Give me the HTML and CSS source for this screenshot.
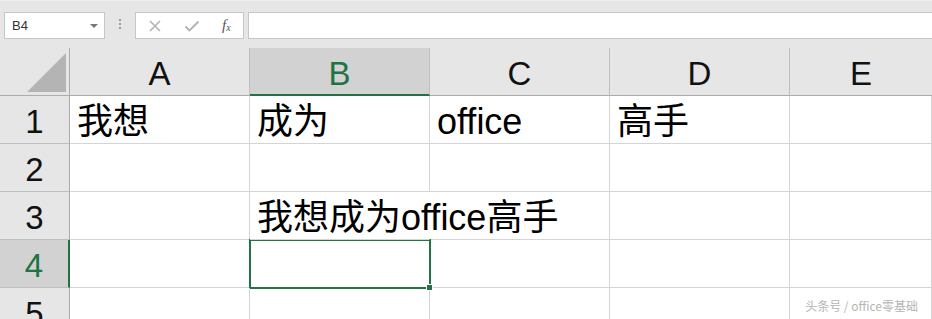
FILE: index.html
```html
<!DOCTYPE html>
<html lang="zh-CN">
<head>
    <meta charset="UTF-8">
    <title>Book1 - Excel</title>
    <link rel="stylesheet" href="styles.css">
</head>
<body>
    <div class="formula-bar">
        <div class="name-box">
            <span>B4</span>
            <span class="caret"></span>
        </div>
        <div class="grip"></div>
        <div class="fx-buttons">
            <svg class="fx-icon" width="14" height="14" viewBox="0 0 14 14"><path d="M2 2 L12 12 M12 2 L2 12" stroke="#b3b3b3" stroke-width="1.6" fill="none"/></svg>
            <svg class="fx-icon" width="16" height="14" viewBox="0 0 16 14"><path d="M1.5 7.5 L5.5 11.5 L14.5 2.5" stroke="#b3b3b3" stroke-width="1.8" fill="none"/></svg>
            <span class="fx">f<sub>x</sub></span>
        </div>
        <div class="formula-input"></div>
    </div>

    <div class="sheet">
        <div class="corner"><span class="corner-tri"></span></div>
        <div class="col-head">A</div>
        <div class="col-head active">B</div>
        <div class="col-head">C</div>
        <div class="col-head">D</div>
        <div class="col-head last">E</div>

        <div class="row-head">1</div>
        <div class="cell">我想</div>
        <div class="cell">成为</div>
        <div class="cell">office</div>
        <div class="cell">高手</div>
        <div class="cell"></div>

        <div class="row-head">2</div>
        <div class="cell"></div>
        <div class="cell"></div>
        <div class="cell"></div>
        <div class="cell"></div>
        <div class="cell"></div>

        <div class="row-head">3</div>
        <div class="cell"></div>
        <div class="cell spill">我想成为office高手</div>
        <div class="cell"></div>
        <div class="cell"></div>
        <div class="cell"></div>

        <div class="row-head active">4</div>
        <div class="cell"></div>
        <div class="cell selected"><span class="handle"></span></div>
        <div class="cell"></div>
        <div class="cell"></div>
        <div class="cell"></div>

        <div class="row-head">5</div>
        <div class="cell"></div>
        <div class="cell"></div>
        <div class="cell"></div>
        <div class="cell"></div>
        <div class="cell"></div>
    </div>

    <div class="watermark">头条号 / office零基础</div>
</body>
</html>
```

FILE: styles.css
```css
body {
    margin: 0;
    width: 932px;
    height: 319px;
    overflow: hidden;
    background: #e6e6e6;
    font-family: "Liberation Sans", "Noto Sans CJK SC", sans-serif;
    position: relative;
}
.formula-bar {
    height: 48px;
    display: flex;
    align-items: flex-start;
    padding: 11px 0 0 4px;
    box-sizing: border-box;
    border-top: 1px solid #f0f0f0;
}
.name-box {
    width: 101px;
    height: 27px;
    box-sizing: border-box;
    background: white;
    border: 1px solid #c6c6c6;
    display: flex;
    align-items: center;
    justify-content: space-between;
    padding: 0 6px 0 7px;
    font-size: 13px;
    color: #333;
}
.caret {
    width: 0;
    height: 0;
    border-left: 4px solid transparent;
    border-right: 4px solid transparent;
    border-top: 4px solid #777;
}
.grip {
    width: 2px;
    height: 12px;
    margin: 7px 14px 0 14px;
    background: repeating-linear-gradient(#9a9a9a 0 2px, transparent 2px 4px);
}
.fx-buttons {
    width: 109px;
    height: 27px;
    box-sizing: border-box;
    background: white;
    border: 1px solid #c6c6c6;
    display: flex;
    align-items: center;
    gap: 22px;
    padding-left: 12px;
}
.fx {
    font-family: "Liberation Serif", serif;
    font-style: italic;
    font-size: 15px;
    color: #555;
    line-height: 1;
}
.fx sub {
    font-size: 10px;
    vertical-align: -1px;
}
.formula-input {
    flex: 1;
    height: 27px;
    margin-left: 4px;
    box-sizing: border-box;
    background: white;
    border: 1px solid #c6c6c6;
    border-right: none;
}
.sheet {
    display: grid;
    grid-template-columns: 70px 180px 180px 180px 180px 1fr;
    grid-template-rows: 48px;
    grid-auto-rows: 48px;
    background: white;
}
.corner {
    background: #e6e6e6;
    border-right: 1px solid #ababab;
    border-bottom: 1px solid #ababab;
    position: relative;
}
.corner-tri {
    position: absolute;
    right: 3px;
    bottom: 3px;
    width: 0;
    height: 0;
    border-left: 39px solid transparent;
    border-bottom: 39px solid #b4b4b4;
}
.col-head {
    background: #e6e6e6;
    border-right: 1px solid #bfbfbf;
    border-bottom: 1px solid #ababab;
    text-align: center;
    font-size: 33px;
    line-height: 52px;
    color: #111;
    box-sizing: border-box;
}
.col-head.last {
    border-right: none;
}
.col-head.active {
    background: #d2d2d2;
    color: #217346;
    border-bottom: 2px solid #217346;
    line-height: 51px;
}
.row-head {
    background: #e6e6e6;
    border-right: 1px solid #ababab;
    border-bottom: 1px solid #bfbfbf;
    text-align: center;
    font-size: 33px;
    line-height: 52px;
    color: #111;
    box-sizing: border-box;
}
.row-head.active {
    background: #d2d2d2;
    color: #217346;
    border-right: 2px solid #217346;
}
.cell {
    border-right: 1px solid #d4d4d4;
    border-bottom: 1px solid #d4d4d4;
    box-sizing: border-box;
    padding-left: 7px;
    font-size: 36px;
    line-height: 52px;
    white-space: nowrap;
    color: #000;
    position: relative;
}
.cell.spill {
    border-right-color: transparent;
    z-index: 1;
}
.cell.selected {
    border: none;
}
.cell.selected::after {
    content: "";
    position: absolute;
    left: -1px;
    top: -1px;
    right: -1px;
    bottom: -1px;
    border: 2px solid #217346;
}
.handle {
    position: absolute;
    right: -3px;
    bottom: -3px;
    width: 5px;
    height: 5px;
    background: #217346;
    border: 1px solid white;
    z-index: 2;
}
.watermark {
    position: absolute;
    right: 14px;
    bottom: 5px;
    font-family: "Noto Sans CJK SC", sans-serif;
    font-size: 12px;
    color: #b5b5b5;
}
```
